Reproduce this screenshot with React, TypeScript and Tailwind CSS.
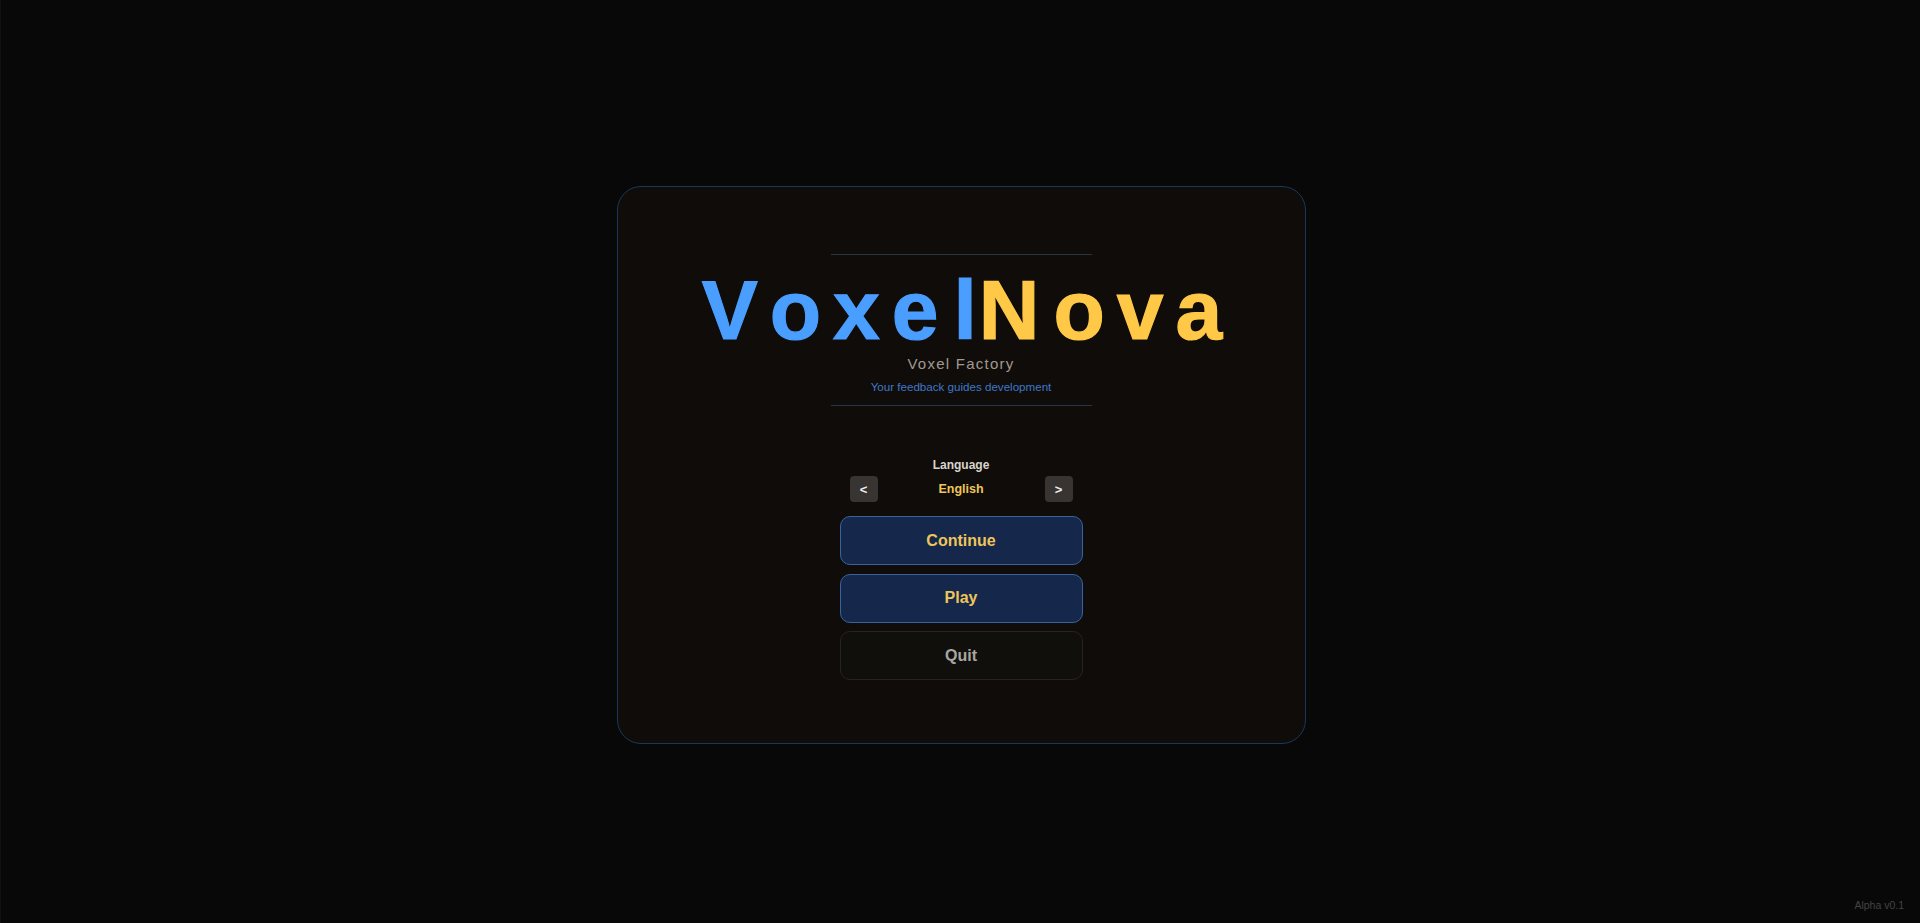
import React, { useState } from 'react';

const LANGUAGES = ['English', 'Français', 'Deutsch', 'Español'];

const MenuButton = ({ label, muted }: { label: string; muted?: boolean }) => (
  <button
    className={
      muted
        ? 'h-[49px] w-full rounded-[10px] border border-[#262320] bg-[#110f0c] text-[16px] font-bold text-[#a8a6a2]'
        : 'h-[49px] w-full rounded-[10px] border border-[#3a629e] bg-[#15274a] text-[16px] font-bold text-[#eec55a]'
    }
  >
    {label}
  </button>
);

const ArrowButton = ({ label, onClick }: { label: string; onClick: () => void }) => (
  <button
    onClick={onClick}
    className="h-[26px] w-[28px] rounded-[4px] bg-[#383431] text-[13px] font-bold leading-none text-[#eeeeee]"
  >
    {label}
  </button>
);

export default function App() {
  const [lang, setLang] = useState(0);
  const step = (d: number) => setLang((l) => (l + d + LANGUAGES.length) % LANGUAGES.length);

  return (
    <div className="relative flex h-[923px] w-full items-center justify-center overflow-hidden border-l border-[#121212] bg-[#080808] pl-[1px] pt-[7px] font-['Liberation_Sans',Arial,sans-serif]">
      <div className="flex h-[558px] w-[689px] flex-col items-center rounded-[24px] border border-[#17395c] bg-[#0f0c0a] pt-[67px]">
        <div className="h-px w-[261px] bg-[#2a3442]" />
        <h1 className="ml-[2px] mt-[13px] flex h-[84px] items-center whitespace-pre text-[84px] font-bold leading-none tracking-[12px] [font-kerning:none]">
          <span className="text-[#4a9eff] [-webkit-text-stroke:1.2px_#4a9eff]">Voxe</span>
          <span className="ml-[3px] mr-[2px] tracking-normal text-[#4a9eff] [-webkit-text-stroke:1.2px_#4a9eff]">l</span>
          <span className="mr-[2px] text-[#ffc847] [-webkit-text-stroke:1.2px_#ffc847]">N</span>
          <span className="mr-[-12px] text-[#ffc847] [-webkit-text-stroke:1.2px_#ffc847]">ova</span>
        </h1>
        <p className="mt-[3px] text-[15px] leading-[18px] tracking-[1.25px] text-[#a09a90]">Voxel Factory</p>
        <p className="mt-[6px] text-[11.6px] leading-[16px] text-[#3f78c8]">Your feedback guides development</p>
        <div className="mt-[10px] h-px w-[261px] bg-[#2a3442]" />

        <div className="mt-[51px] text-[12px] font-bold leading-[16px] text-[#d8d4cc]">Language</div>
        <div className="mt-[3px] flex w-[223px] items-center justify-between">
          <ArrowButton label="<" onClick={() => step(-1)} />
          <span className="text-[12.5px] font-bold text-[#eec55a]">{LANGUAGES[lang]}</span>
          <ArrowButton label=">" onClick={() => step(1)} />
        </div>

        <div className="mt-[14px] flex w-[243px] flex-col gap-[8.5px]">
          <MenuButton label="Continue" />
          <MenuButton label="Play" />
          <MenuButton label="Quit" muted />
        </div>
      </div>

      <div className="absolute bottom-[9px] right-[16px] text-[10.5px] text-[#444444]">Alpha v0.1</div>
    </div>
  );
}
